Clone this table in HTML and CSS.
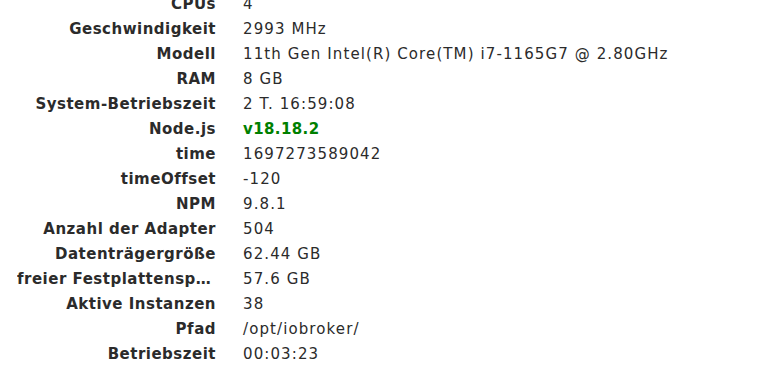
FILE: index.html
```html
<!DOCTYPE html>
<html>
<head>
<meta charset="utf-8">
<link rel="stylesheet" href="styles.css">
</head>
<body>
<div class="info">
  <div class="row"><div class="label">CPUs</div><div class="value">4</div></div>
  <div class="row"><div class="label">Geschwindigkeit</div><div class="value">2993 MHz</div></div>
  <div class="row"><div class="label">Modell</div><div class="value">11th Gen Intel(R) Core(TM) i7-1165G7 @ 2.80GHz</div></div>
  <div class="row"><div class="label">RAM</div><div class="value">8 GB</div></div>
  <div class="row"><div class="label">System-Betriebszeit</div><div class="value">2 T. 16:59:08</div></div>
  <div class="row"><div class="label">Node.js</div><div class="value ok">v18.18.2</div></div>
  <div class="row"><div class="label">time</div><div class="value">1697273589042</div></div>
  <div class="row"><div class="label">timeOffset</div><div class="value">-120</div></div>
  <div class="row"><div class="label">NPM</div><div class="value">9.8.1</div></div>
  <div class="row"><div class="label">Anzahl der Adapter</div><div class="value">504</div></div>
  <div class="row"><div class="label">Datenträgergröße</div><div class="value">62.44 GB</div></div>
  <div class="row"><div class="label">freier Festplattenspeicher</div><div class="value">57.6 GB</div></div>
  <div class="row"><div class="label">Aktive Instanzen</div><div class="value">38</div></div>
  <div class="row"><div class="label">Pfad</div><div class="value">/opt/iobroker/</div></div>
  <div class="row"><div class="label">Betriebszeit</div><div class="value">00:03:23</div></div>
</div>
</body>
</html>
```
FILE: styles.css
```css
html, body {
  margin: 0;
  padding: 0;
  background: #fff;
}
body {
  font-family: "DejaVu Sans", Verdana, sans-serif;
  font-size: 15px;
  color: #2b2b2b;
}
.info {
  margin-top: -9px;
  padding-left: 17px;
}
.row {
  display: flex;
  height: 25px;
  align-items: center;
  gap: 27px;
}
.label {
  width: 199px;
  flex: none;
  text-align: right;
  font-weight: bold;
  letter-spacing: 0.5px;
  white-space: nowrap;
  overflow: hidden;
  text-overflow: ellipsis;
}
.value {
  white-space: nowrap;
  letter-spacing: 1.1px;
}
.value.ok {
  color: #008000;
  font-weight: bold;
  letter-spacing: 0.4px;
}
```
